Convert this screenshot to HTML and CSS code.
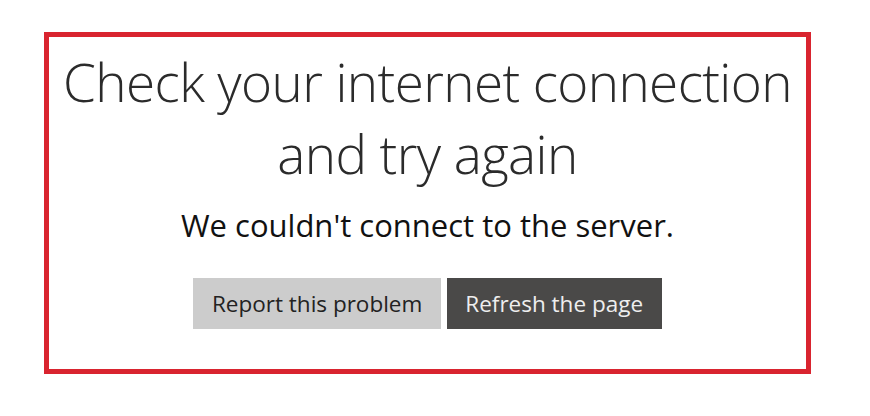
FILE: index.html
```html
<!DOCTYPE html>
<html lang="en">
<head>
<meta charset="utf-8">
<title>Check your internet connection</title>
<link rel="stylesheet" href="styles.css">
</head>
<body>
<div class="page">
  <div class="card">
    <h1 class="title">Check your internet connection<br>and try again</h1>
    <p class="message">We couldn't connect to the server.</p>
    <div class="actions">
      <button class="btn btn-light" type="button">Report this problem</button>
      <button class="btn btn-dark" type="button">Refresh the page</button>
    </div>
  </div>
</div>
</body>
</html>
```

FILE: styles.css
```css
html, body {
  margin: 0;
  padding: 0;
  background: #ffffff;
}

.page {
  padding: 32px 0 0 44px;
}

.card {
  box-sizing: border-box;
  width: 767px;
  height: 342px;
  border: 5px solid #d9242f;
  display: flex;
  flex-direction: column;
  align-items: center;
  font-family: "Open Sans", "Noto Sans", sans-serif;
}

.title {
  margin: 9px 0 0;
  font-size: 53px;
  line-height: 72px;
  font-weight: 300;
  color: #2b2b2b;
  text-align: center;
  letter-spacing: -0.6px;
}

.message {
  margin: 16px 0 0;
  font-size: 31px;
  line-height: 38px;
  font-weight: 400;
  color: #111111;
}

.actions {
  margin-top: 34px;
  display: flex;
  gap: 6px;
}

.btn {
  height: 51px;
  padding: 0 18.5px;
  border: none;
  font-family: "Open Sans", "Noto Sans", sans-serif;
  font-size: 22.5px;
  cursor: pointer;
}

.btn-light {
  background: #cccccc;
  color: #222222;
}

.btn-dark {
  background: #4a4948;
  color: #eeeeee;
}
```
